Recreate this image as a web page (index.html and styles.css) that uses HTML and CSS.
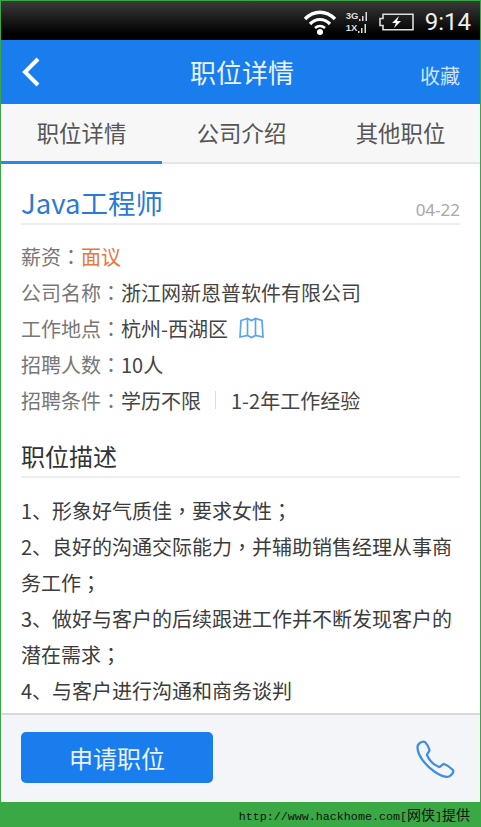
FILE: index.html
```html
<!DOCTYPE html>
<html lang="zh-CN">
<head>
    <meta charset="UTF-8">
    <meta name="viewport" content="width=device-width, initial-scale=1.0">
    <title>职位详情</title>
    <link rel="stylesheet" href="styles.css">
</head>
<body>
    <div class="phone">
        <!-- status bar -->
        <div class="status_bar">
            <svg class="wifi" width="34" height="26" viewBox="0 0 34 26">
                <path d="M2 10 C11 1 23 1 32 10" fill="none" stroke="#fff" stroke-width="3.4"/>
                <path d="M7 15 C13 9 21 9 27 15" fill="none" stroke="#fff" stroke-width="3.2"/>
                <path d="M12 19 C15 16.5 19 16.5 22 19" fill="none" stroke="#fff" stroke-width="2.6"/>
                <circle cx="17" cy="23" r="3" fill="#fff"/>
            </svg>
            <div class="signal">
                <div class="signal_row"><span>3G</span><svg width="10" height="10" viewBox="0 0 10 10"><path d="M1 10V8H2.500V10ZM4 10V5H5.500V10ZM7.500 10V1H9V10Z" fill="#ddd"/></svg></div>
                <div class="signal_row"><span>1X</span><svg width="10" height="10" viewBox="0 0 10 10"><path d="M1 10V8H2.500V10ZM4 10V5H5.500V10ZM7.500 10V1H9V10Z" fill="#ddd"/></svg></div>
            </div>
            <svg class="battery" width="35" height="18" viewBox="0 0 35 18">
                <path d="M4 1.200H34V16.800H4V12.500H1V5.500H4Z" fill="none" stroke="#ddd" stroke-width="1.600"/>
                <path d="M20 3 L13 10 H17 L15 15 L22 8 H18 Z" fill="#fff"/>
            </svg>
            <span class="clock">9:14</span>
        </div>

        <!-- app bar -->
        <div class="app_bar">
            <svg class="back" width="20" height="32" viewBox="0 0 20 32">
                <path d="M17 3 L4 16 L17 29" fill="none" stroke="#fff" stroke-width="4"/>
            </svg>
            <h1 class="app_title">职位详情</h1>
            <a class="app_fav">收藏</a>
        </div>

        <!-- tabs -->
        <div class="tabs">
            <div class="tab active">职位详情</div>
            <div class="tab">公司介绍</div>
            <div class="tab">其他职位</div>
        </div>

        <!-- content -->
        <div class="content">
            <div class="job_head">
                <h2 class="job_title">Java工程师</h2>
                <span class="job_date">04-22</span>
            </div>
            <div class="info">
                <div class="info_row"><span class="label">薪资<span class="mid">：</span></span><span class="salary">面议</span></div>
                <div class="info_row"><span class="label">公司名称<span class="mid">：</span></span>浙江网新恩普软件有限公司</div>
                <div class="info_row"><span class="label">工作地点<span class="mid">：</span></span>杭州-西湖区
                    <svg class="map" width="25" height="22" viewBox="0 0 25 22">
                        <path d="M2 3.500 L8.500 1.500 L12.500 3.500 L16.500 1.500 L23 3.500 L24 20 L16.500 18.500 L12.500 20.500 L8.500 18.500 L1 20 Z M8.500 1.500 V18.500 M16.500 1.500 V18.500" fill="none" stroke="#5aa5ee" stroke-width="1.700"/>
                    </svg>
                </div>
                <div class="info_row"><span class="label">招聘人数<span class="mid">：</span></span>10人</div>
                <div class="info_row"><span class="label">招聘条件<span class="mid">：</span></span>学历不限<i class="sep"></i>1-2年工作经验</div>
            </div>
            <h3 class="desc_title">职位描述</h3>
            <div class="desc">
                <p>1、形象好气质佳<span class="mid">，</span>要求女性<span class="mid">；</span></p>
                <p>2、良好的沟通交际能力<span class="mid">，</span>并辅助销售经理从事商</p>
                <p>务工作<span class="mid">；</span></p>
                <p>3、做好与客户的后续跟进工作并不断发现客户的</p>
                <p>潜在需求<span class="mid">；</span></p>
                <p>4、与客户进行沟通和商务谈判</p>
            </div>
        </div>

        <!-- footer -->
        <div class="footer">
            <button class="apply">申请职位</button>
            <svg class="phone_icon" width="40" height="38" viewBox="0 0 40 38">
                <path d="M3 5 C5 2 8 1 10 2 C12 4 14 8 14.500 10 C14.500 12 12 13 12 15 C14 20 19 25 24 27 C26 27 27 24 29 24 C32 25 36 28 38 30 C39 32 37 35 34 36.500 C31 37.500 26 36 20 32 C13 27 7 21 4 14 C2.500 10 2 7 3 5 Z" fill="none" stroke="#3c90e6" stroke-width="2.300"/>
            </svg>
        </div>
    </div>
    <div class="watermark"><span class="wm_latin">http://www.hackhome.com[</span>网侠<span class="wm_latin">]</span>提供</div>
</body>
</html>
```

FILE: styles.css
```css
* {
    box-sizing: border-box;
    margin: 0;
    padding: 0;
}

body {
    width: 481px;
    height: 827px;
    overflow: hidden;
    background-color: #39a845;
    font-family: "Noto Sans CJK SC", "Liberation Sans", sans-serif;
    color: #333;
}

.phone {
    width: 479px;
    height: 801px;
    margin: 1px 1px 0 1px;
    display: flex;
    flex-direction: column;
    background-color: #fff;
}

/* status bar */
.status_bar {
    height: 39px;
    flex: none;
    display: flex;
    align-items: center;
    padding-right: 9px;
    background: linear-gradient(#3a3a3a, #000 85%);
}
.wifi {
    margin-left: auto;
    margin-top: 2px;
}
.signal {
    margin-left: 9px;
    margin-top: 1px;
    width: 24px;
}
.signal_row {
    display: flex;
    align-items: flex-end;
    height: 12px;
    color: #ddd;
    font-family: "Liberation Sans", sans-serif;
    font-size: 9.500px;
    font-weight: bold;
    line-height: 11px;
}
.battery {
    margin-left: 9px;
    margin-top: 3px;
}
.clock {
    margin-left: 11px;
    color: #eee;
    font-family: Roboto, sans-serif;
    font-size: 24px;
    line-height: 39px;
    margin-top: 3px;
}

/* app bar */
.app_bar {
    height: 64px;
    flex: none;
    position: relative;
    display: flex;
    align-items: center;
    justify-content: center;
    background-color: #1a7dee;
    color: #e8f3ff;
}
.back {
    position: absolute;
    left: 20px;
    top: 16px;
}
.app_title {
    font-size: 26px;
    font-weight: normal;
    margin-top: -2px;
    margin-left: 3px;
}
.app_fav {
    position: absolute;
    right: 20px;
    top: 21px;
    font-size: 20px;
    line-height: 30px;
    color: #cfe4fb;
}

/* tabs */
.tabs {
    height: 60px;
    flex: none;
    display: flex;
    background-color: #f7f7f7;
    border-bottom: 2px solid #e6e6e6;
}
.tab {
    flex: 1;
    height: 60px;
    line-height: 56px;
    text-align: center;
    font-size: 22.400px;
    color: #555;
}
.tab.active {
    flex: none;
    width: 161px;
    border-bottom: 3px solid #2b88ea;
}

/* content */
.content {
    flex: 1;
    min-height: 0;
    padding: 0 20px;
    overflow: hidden;
}
.job_head {
    height: 61px;
    display: flex;
    justify-content: space-between;
    align-items: flex-end;
    border-bottom: 2px solid #eee;
}
.job_title {
    font-size: 27.500px;
    font-weight: normal;
    line-height: 40px;
    margin-bottom: 1px;
    color: #2a7ad6;
}
.job_date {
    font-size: 17px;
    line-height: 26px;
    color: #a8a8a8;
    font-family: "Noto Sans", sans-serif;
}
.info {
    padding-top: 13px;
}
.info_row {
    height: 36px;
    display: flex;
    align-items: center;
    font-size: 20px;
    color: #444;
}
.label {
    color: #777;
}
/* colon, comma and semicolon sit in the middle of the cell in the reference */
.mid {
    font-family: "Noto Sans CJK TC", sans-serif;
    font-feature-settings: "locl" 0;
}
.salary {
    color: #e9763a;
}
.map {
    margin-left: 11px;
}
.sep {
    width: 1px;
    height: 18px;
    margin: 0 15px 0 14px;
    background-color: #ddd;
}
.desc_title {
    height: 60px;
    padding-top: 20px;
    font-size: 24px;
    font-weight: normal;
    line-height: 36px;
    border-bottom: 2px solid #eee;
    color: #333;
}
.desc {
    padding-top: 15px;
}
.desc p {
    font-size: 20px;
    line-height: 36px;
    white-space: nowrap;
    color: #3c3c3c;
}

/* footer */
.footer {
    height: 89px;
    flex: none;
    display: flex;
    align-items: center;
    justify-content: space-between;
    padding: 0 25px 3px 20px;
    background-color: #f3f5f9;
    border-top: 2px solid #d8d8d8;
}
.apply {
    width: 192px;
    height: 51px;
    border: 0;
    border-radius: 5px;
    background-color: #1a7dee;
    color: #e8f3ff;
    font-family: inherit;
    font-size: 24px;
}
.phone_icon {
    margin-top: 3px;
}

.watermark {
    height: 25px;
    padding-right: 11px;
    text-align: right;
    line-height: 25px;
    font-size: 14px;
    color: #111;
}
.wm_latin {
    font-family: "Liberation Mono", monospace;
    font-size: 11.700px;
}
```
